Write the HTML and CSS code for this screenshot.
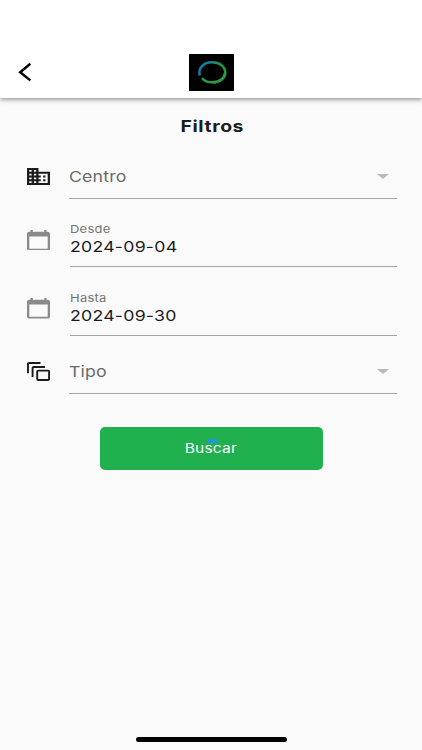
FILE: index.html
```
<!DOCTYPE html>
<html lang="es">
<head>
<meta charset="utf-8">
<meta name="viewport" content="width=device-width">
<title>Filtros</title>
<link rel="stylesheet" href="styles.css">
</head>
<body>
<header class="bar">
  <svg class="back" viewBox="0 0 14 20"><path d="M12.300 1.800 2.200 10.200 12.300 18.400" fill="none" stroke="#000" stroke-width="2.500"/></svg>
  <svg class="logo" viewBox="0 0 45 37">
    <defs><linearGradient id="ring" x1="0" y1="0" x2="1" y2="0.250"><stop offset="0" stop-color="#1478b4"/><stop offset=".35" stop-color="#1b8290"/><stop offset=".75" stop-color="#25914f"/><stop offset="1" stop-color="#269a48"/></linearGradient></defs>
    <rect width="45" height="37" fill="#000"/>
    <path d="M10.900 21.500C8.500 14 15 8.200 23 8.200c8 0 13.200 4.500 13.200 10.200S30.500 28.300 23.500 28.300" fill="none" stroke="url(#ring)" stroke-width="2.500"/>
    <path d="M36.200 18.400c0 5.500-5.500 9.900-12.700 9.900-4.500 0-8-1.200-10.500-4.100" fill="none" stroke="#2a9c49" stroke-width="2.500"/>
  </svg>
</header>
<main class="filters">
  <h1 class="title"><span>Filtros</span></h1>
  <div class="row select">
    <svg class="icon domain" viewBox="2 3 20 18" preserveAspectRatio="none"><path d="M12 7V3H2v18h20V7H12zM6 19H4v-2h2v2zm0-4H4v-2h2v2zm0-4H4V9h2v2zm0-4H4V5h2v2zm4 12H8v-2h2v2zm0-4H8v-2h2v2zm0-4H8V9h2v2zm0-4H8V5h2v2zm10 12h-8v-2h2v-2h-2v-2h2v-2h-2V9h8v10zm-2-8h-2v2h2v-2zm0 4h-2v2h2v-2z"/></svg>
    <div class="field"><span class="hint">Centro</span><i class="caret"></i></div>
  </div>
  <div class="row date">
    <svg class="icon cal" viewBox="2 1 20 22" preserveAspectRatio="none"><path d="M20 3h-1V1h-2v2H7V1H5v2H4c-1.100 0-2 .9-2 2v16c0 1.100.9 2 2 2h16c1.100 0 2-.9 2-2V5c0-1.100-.9-2-2-2zm0 18H4V8h16v13z"/></svg>
    <div class="field"><span class="label">Desde</span><span class="value">2024-09-04</span></div>
  </div>
  <div class="row date">
    <svg class="icon cal" viewBox="2 1 20 22" preserveAspectRatio="none"><path d="M20 3h-1V1h-2v2H7V1H5v2H4c-1.100 0-2 .9-2 2v16c0 1.100.9 2 2 2h16c1.100 0 2-.9 2-2V5c0-1.100-.9-2-2-2zm0 18H4V8h16v13z"/></svg>
    <div class="field"><span class="label">Hasta</span><span class="value">2024-09-30</span></div>
  </div>
  <div class="row select last">
    <svg class="icon stack" viewBox="0 0 23 19"><g fill="none" stroke="#1c1c1c" stroke-width="1.900"><path d="M1 11.300V2q0-1 1-1h11.500"/><path d="M5.600 14.900V6q0-1 1-1H18"/><rect x="10.200" y="8.600" width="11.900" height="9.400" rx="1"/></g></svg>
    <div class="field"><span class="hint">Tipo</span><i class="caret"></i></div>
  </div>
  <button class="search"><span class="search-text">Buscar</span><i class="mark"></i></button>
</main>
<div class="home"></div>
</body>
</html>
```
FILE: styles.css
```
* { box-sizing: border-box; }
body {
  margin: 0;
  height: 750px;
  display: flex;
  flex-direction: column;
  overflow: hidden;
  background: #fafafa;
  color: #1c1c1c;
  font-family: Inter, "Liberation Sans", sans-serif;
}
.bar {
  height: 98px;
  flex: none;
  padding: 54px 18px 0;
  display: grid;
  grid-template-columns: 1fr 45px 1fr;
  background: #fff;
  box-shadow: 0 1px 5px rgba(0, 0, 0, .5);
}
.back { width: 14px; height: 20px; margin-top: 8px; }
.logo { width: 45px; height: 37px; }
.filters {
  flex: 1;
  display: flex;
  flex-direction: column;
  padding: 0 25px 0 27px;
}
.title {
  margin: 18px 0 0;
  height: 20px;
  font-size: 16px;
  line-height: 20px;
  font-weight: 650;
  letter-spacing: .5px;
  text-align: center;
}
.title span, .search-text { display: inline-block; transform: scaleX(1.2); }
.title span { transform: scaleX(1.21); }
.row { display: flex; }
.select { height: 63px; }
.date { height: 68px; }
.date + .date { height: 69px; }
.last { height: 58px; }
.icon { width: 23px; flex: none; fill: #1c1c1c; }
.domain { height: 17px; margin-top: 32px; }
.cal { height: 20.5px; margin-top: 30.5px; fill: #8a8a8a; }
.date + .date .cal { margin-top: 31px; }
.stack { height: 19px; margin-top: 26px; }
.field {
  flex: 1;
  margin-left: 19px;
  border-bottom: 1px solid #a4a4a4;
  display: flex;
}
.select .field { align-items: flex-end; justify-content: space-between; padding: 0 8px 11px 0; }
.date .field { margin-left: 20px; flex-direction: column; align-items: flex-start; justify-content: flex-end; padding-bottom: 9px; }
.hint, .label, .value { transform: scaleX(1.18); transform-origin: 0 50%; white-space: nowrap; }
.hint { font-size: 15px; line-height: 20px; color: #6a6a6a; letter-spacing: .15px; }
.label { font-size: 11px; line-height: 16px; color: #747474; letter-spacing: .2px; }
.value { font-size: 15px; line-height: 20px; letter-spacing: .2px; }
.caret {
  margin-bottom: 8px;
  border: solid transparent;
  border-width: 5px 6px 0;
  border-top-color: #b8b8b8;
}
.search {
  position: relative;
  align-self: center;
  width: 223px;
  height: 43px;
  margin: 32.5px 2px 0 0;
  padding: 0;
  border: 0;
  border-radius: 5px;
  background: #20b04e;
  color: #fff;
  font: 400 13px/20px Inter, "Liberation Sans", sans-serif;
  letter-spacing: .15px;
}
.mark {
  position: absolute;
  left: 107px;
  top: 12px;
  width: 11px;
  height: 4px;
  background: #2196dc;
}
.home {
  flex: none;
  align-self: center;
  width: 151px;
  height: 5px;
  margin-bottom: 8px;
  border-radius: 3px;
  background: #000;
}
```
